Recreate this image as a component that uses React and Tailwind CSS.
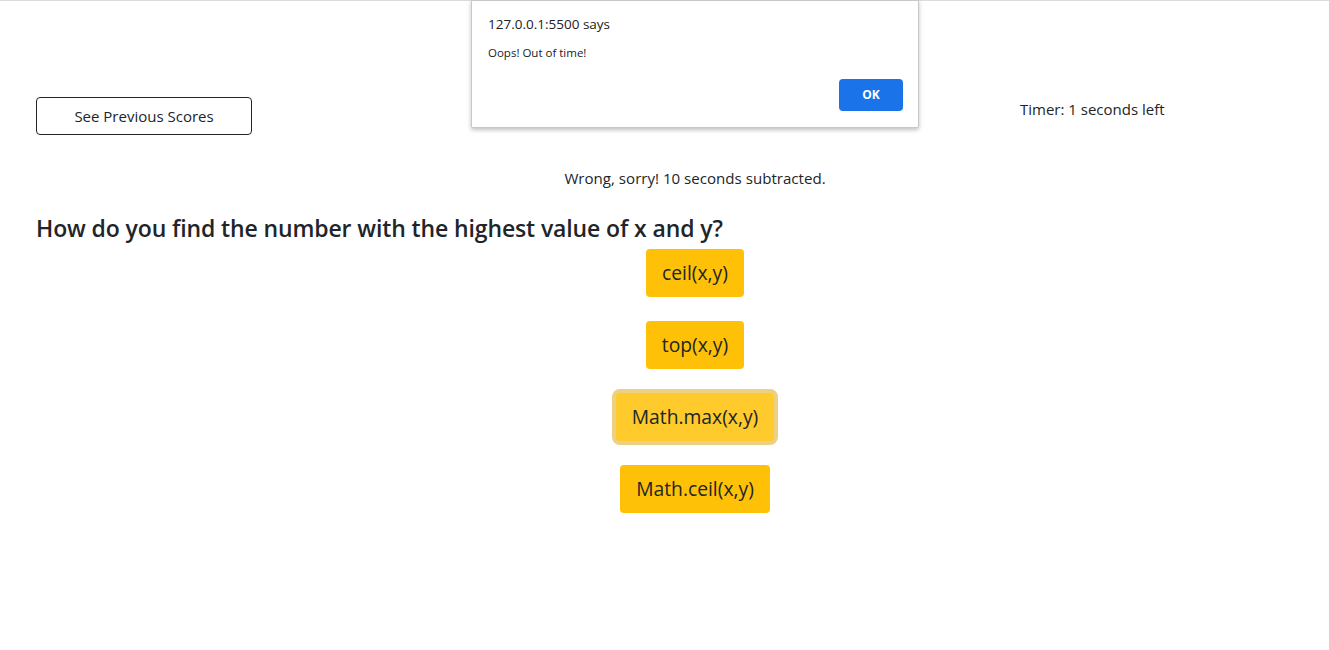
import React from "react";

export default function App() {
  const answers = ["ceil(x,y)", "top(x,y)", "Math.max(x,y)", "Math.ceil(x,y)"];
  return (
    <div className="relative min-h-[650px] w-full bg-white border-t border-[#dadce0] text-[#212529] font-['Open_Sans',sans-serif]">
      <div className="pt-[96px] px-[36px]">
        <div className="flex items-start">
          <button className="w-[216px] h-[38px] rounded-[4px] border border-[#212529] text-[15px] text-[#212529] bg-white">
            See Previous Scores
          </button>
          <div className="ml-[768px] text-[15px] leading-[24px]">Timer: 1 seconds left</div>
        </div>
        <div className="mt-[31px] pl-[61px] text-center text-[15.1px] leading-[24px]">
          Wrong, sorry! 10 seconds subtracted.
        </div>
        <h2 className="mt-[24px] text-[23px] font-semibold leading-[29px] tracking-[-0.12px]">
          How do you find the number with the highest value of x and y?
        </h2>
        <div className="mt-[6px] pl-[61px] flex flex-col items-center gap-[24px]">
          {answers.map((a, i) => (
            <button
              key={a}
              className={
                "h-[48px] px-[16px] rounded-[4px] text-[19.3px] text-[#212529] " +
                (i === 2
                  ? "bg-[#ffca2c] shadow-[0_0_0_4px_#ecd182]"
                  : "bg-[#ffc107]")
              }
            >
              {a}
            </button>
          ))}
        </div>
      </div>

      <div className="absolute left-[471px] top-[-1px] w-[448px] h-[128px] bg-white border border-[#c8c8c8] rounded-b-[2px] shadow-[0_2px_4px_rgba(0,0,0,0.25)]">
        <div className="pl-[16px] pt-[13px] text-[13.5px] leading-[20px] text-[#202124]">127.0.0.1:5500 says</div>
        <div className="pl-[16px] mt-[11px] text-[11.5px] leading-[16px] text-[#202124]">Oops! Out of time!</div>
        <div className="flex justify-end pr-[15px] mt-[18px]">
          <button className="w-[64px] h-[32px] rounded-[4px] bg-[#1a73e8] text-white text-[12px] font-bold">OK</button>
        </div>
      </div>
    </div>
  );
}
